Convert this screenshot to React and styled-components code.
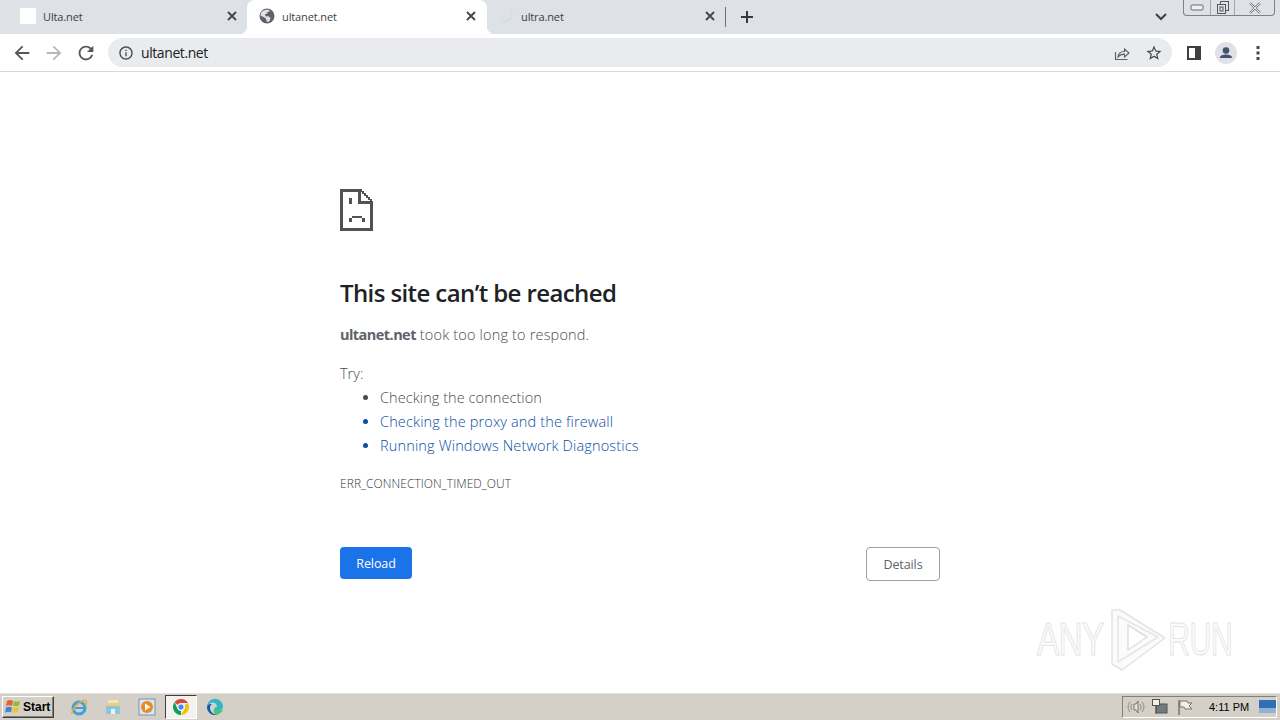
import React from 'react';
import styled, {createGlobalStyle} from 'styled-components';

const FONT = '"Open Sans", "Noto Sans", sans-serif';

const Global = createGlobalStyle`
  html, body {
    margin: 0;
    padding: 0;
    background: #fff;
    overflow: hidden;
  }
  body {
    font-family: ${FONT};
  }
  * {
    box-sizing: border-box;
  }
`;

const Page = styled.div`
  position: relative;
  width: 1280px;
  height: 720px;
  display: flex;
  flex-direction: column;
  overflow: hidden;
`;

/* browser chrome */
const TabStrip = styled.div`
  height: 34px;
  flex: none;
  display: flex;
  background: #dee1e6;
`;

const Tab = styled.div`
  position: relative;
  width: ${p => p.$width}px;
  height: 34px;
  flex: none;
  display: flex;
  align-items: center;
  padding: 0 ${p => (p.$active ? 9 : 8)}px 2px ${p => p.$left}px;
  border-radius: 8px 8px 0 0;
  background: ${p => (p.$active ? '#fff' : 'transparent')};

  ${p => p.$active && `
    &::before, &::after {
      content: '';
      position: absolute;
      bottom: 0;
      width: 8px;
      height: 8px;
    }
    &::before {
      left: -8px;
      background: radial-gradient(circle at 0 0, transparent 8px, #fff 8.5px);
    }
    &::after {
      right: -8px;
      background: radial-gradient(circle at 100% 0, transparent 8px, #fff 8.5px);
    }
  `}
`;

const TabTitle = styled.span`
  flex: 1;
  margin-left: ${p => p.$gap}px;
  font-size: 11px;
  letter-spacing: -0.12px;
  color: #3c4043;
  white-space: nowrap;
`;

const BlankFavicon = styled.div`
  width: 16px;
  height: 16px;
  background: #fff;
`;

const TabClose = styled.svg`
  width: 12px;
  height: 12px;
  flex: none;
  margin-right: 1px;
`;

const TabDivider = styled.div`
  width: 1px;
  height: 20px;
  margin: 7px 0 0 0;
  background: #6f7276;
`;

const NewTab = styled.svg`
  width: 16px;
  height: 16px;
  margin: 9px 0 0 13px;
`;

const StripRight = styled.div`
  margin-left: auto;
  display: flex;
  align-items: flex-start;
`;

const Chevron = styled.svg`
  width: 14px;
  height: 10px;
  margin: 12px 15px 0 0;
`;

const WindowControls = styled.div`
  width: 92px;
  height: 16px;
  margin-right: 5px;
  display: flex;
  border: 1px solid #7d8086;
  border-top: none;
  border-radius: 0 0 4px 4px;
`;

const WindowButton = styled.div`
  flex: none;
  width: ${p => p.$width}px;
  display: flex;
  align-items: center;
  justify-content: center;
  border-left: ${p => (p.$first ? 'none' : '1px solid #a4a7ac')};
`;

const Toolbar = styled.div`
  height: 38px;
  flex: none;
  display: flex;
  align-items: flex-start;
  padding: 4px 0 0 0;
  background: #fff;
  border-bottom: 1px solid #d8d9db;
`;

const NavButton = styled.div`
  width: 32px;
  height: 29px;
  flex: none;
  display: flex;
  align-items: center;
  justify-content: center;
  margin-left: ${p => p.$left || 0}px;
`;

const Omnibox = styled.div`
  width: 1064px;
  height: 29px;
  margin-left: 6px;
  flex: none;
  display: flex;
  align-items: center;
  padding: 0 9px 0 10px;
  border-radius: 15px;
  background: #e9ebee;
`;

const Url = styled.span`
  flex: 1;
  margin-left: 7px;
  font-size: 14px;
  letter-spacing: -0.42px;
  color: #202124;
`;

const OmniIcon = styled.svg`
  width: 18px;
  height: 18px;
  flex: none;
  margin-left: ${p => p.$left || 0}px;
`;

const ToolIcon = styled.svg`
  width: ${p => p.$size || 18}px;
  height: ${p => p.$size || 18}px;
  flex: none;
`;

/* error page */
const Content = styled.main`
  flex: 1;
  background: #fff;
  padding: 117px 0 0 340px;
`;

const Interstitial = styled.div`
  width: 600px;
`;

const SadTab = styled.svg`
  display: block;
  width: 33px;
  height: 42px;
`;

const Heading = styled.h1`
  margin: 44px 0 0;
  font-size: 24px;
  line-height: 36px;
  font-weight: 600;
  letter-spacing: -0.6px;
  color: #202124;
`;

const Lead = styled.p`
  margin: 12px 0 0;
  font-size: 14.5px;
  line-height: 24px;
  font-weight: 300;
  letter-spacing: 0.17px;
  color: #4a4c50;

  strong {
    font-weight: 700;
    letter-spacing: -0.55px;
    color: #5f6368;
  }
`;

const TryLabel = styled.p`
  margin: 15px 0 0;
  font-size: 14.5px;
  line-height: 24px;
  font-weight: 300;
  letter-spacing: 0;
  color: #4a4c50;
`;

const Suggestions = styled.ul`
  margin: 0;
  padding: 0 0 0 40px;
  list-style: disc;
  color: #5f6368;
`;

const Suggestion = styled.li`
  font-size: 14.5px;
  line-height: 24px;
  font-weight: 300;
  letter-spacing: ${p => (p.$link ? 0.15 : 0.07)}px;
  color: ${p => (p.$link ? '#0a4ea6' : '#4a4c50')};
`;

const ErrorCode = styled.div`
  margin-top: 17px;
  font-size: 12px;
  line-height: 18px;
  font-weight: 300;
  letter-spacing: 0.06px;
  color: #33363a;
`;

const Actions = styled.div`
  margin-top: 54px;
  display: flex;
  justify-content: space-between;
  align-items: flex-start;
`;

const ReloadButton = styled.button`
  width: 72px;
  height: 32px;
  padding: 0;
  border: none;
  border-radius: 4px;
  background: #1a73e8;
  color: #fff;
  font-family: ${FONT};
  font-size: 12.5px;
  letter-spacing: -0.1px;
`;

const DetailsButton = styled.button`
  width: 74px;
  height: 34px;
  padding: 0;
  border: 1px solid #9aa0a6;
  border-radius: 4px;
  background: #fff;
  color: #5f6368;
  font-family: ${FONT};
  font-size: 12.5px;
  letter-spacing: -0.1px;
`;

/* watermark sits over the page */
const Watermark = styled.div`
  position: absolute;
  left: 1037px;
  top: 606px;
  height: 66px;
  display: flex;
  align-items: center;
  pointer-events: none;
`;

const WatermarkWord = styled.span`
  font-family: "Liberation Sans", sans-serif;
  font-size: 47px;
  line-height: 66px;
  letter-spacing: -1px;
  color: #fbfbfb;
  -webkit-text-stroke: 1px #e3e3e3;
  transform: scaleX(${p => p.$scale});
  transform-origin: left center;
  margin: ${p => p.$margin};
`;

/* taskbar */
const Taskbar = styled.footer`
  height: 28px;
  flex: none;
  display: flex;
  align-items: center;
  background: #d4d0c8;
  border-top: 1px solid #fff;
  box-shadow: inset 0 1px 0 #e6e3dc;
`;

const StartButton = styled.button`
  width: 52px;
  height: 22px;
  margin-left: 2px;
  padding: 0 0 0 1px;
  display: flex;
  align-items: center;
  gap: 1px;
  background: #d4d0c8;
  border: 1px solid;
  border-color: #fff #404040 #404040 #fff;
  box-shadow: inset -1px -1px 0 #808080;
  font-family: "Liberation Sans", sans-serif;
  font-size: 12px;
  font-weight: 700;
  color: #000;
`;

const QuickLaunch = styled.div`
  display: flex;
  align-items: center;
  margin-left: 8px;
`;

const LaunchItem = styled.div`
  width: ${p => (p.$active ? 32 : 34)}px;
  height: 24px;
  margin: 0 ${p => (p.$active ? 1 : 0)}px;
  display: flex;
  align-items: center;
  justify-content: center;
  ${p => p.$active && `
    background: #f4f2ee;
    border: 1px solid;
    border-color: #404040 #fff #fff #404040;
  `}
`;

const Tray = styled.div`
  margin-left: auto;
  width: 155px;
  height: 22px;
  display: flex;
  align-items: center;
  padding-left: 4px;
  margin-right: 3px;
  border: 1px solid;
  border-color: #808080 #fff #fff #808080;
`;

const TrayIcon = styled.svg`
  width: 18px;
  height: 18px;
  flex: none;
  margin-right: ${p => p.$gap || 0}px;
`;

const Clock = styled.span`
  margin-left: 15px;
  width: 50px;
  flex: none;
  font-family: "Liberation Sans", sans-serif;
  font-size: 11px;
  color: #000;
  white-space: nowrap;
`;

const CloseGlyph = () => (
  <TabClose viewBox="0 0 12 12">
    <path d="M2 2l8 8M10 2l-8 8" stroke="#44474b" strokeWidth="1.9" fill="none"/>
  </TabClose>
);

const GlobeIcon = () => (
  <svg width="16" height="16" viewBox="0 0 16 16">
    <circle cx="8" cy="8" r="7.5" fill="#5f6368"/>
    <path d="M3.2 3.4C5 1.7 8 1.2 10.2 2l.3 1.6-2 .5-.6 1.6-2 .6 1 2.2 2.6-.2 2 1.7-.9 3A6 6 0 0 1 8 14l-1-3.2-2-1.6-3.4-1.5c0-1.6.6-3.3 1.6-4.7z" fill="#dfe1e5"/>
  </svg>
);

const Spinner = () => (
  <svg width="16" height="16" viewBox="0 0 16 16">
    <path d="M10.5 1.5A7 7 0 0 1 3 13" stroke="#cfddf0" strokeWidth="2" fill="none"/>
  </svg>
);

const SadTabIcon = () => (
  <SadTab viewBox="0 0 33 42" shapeRendering="crispEdges">
    <path
      fill="#505356"
      fillRule="evenodd"
      d="M0 0h22v2h2v2h2v2h2v2h2v2h2v2h1v30H0zM3 3v36h27V15H18V3zM21 3h1v2h2v2h2v2h2v2h2v1h-9z"
    />
    <path fill="#505356" d="M9 9h3v6H9zM9 29h3v4H9zM12 27h10v2H12zM22 29h3v4h-3z"/>
  </SadTab>
);

const StartFlag = () => (
  <svg width="18" height="18" viewBox="0 0 18 18">
    <path d="M3 3c2-1.5 4-1.5 6 0L8 8C6 7 4 7 2 8z" fill="#e8622c"/>
    <path d="M10 3c2 1 4 1 6-.3L15 7.500c-2 1-4 1-6 0z" fill="#8dbb3c"/>
    <path d="M2 9.500c2-1 4-1 6 0L7 14.500c-2-1-4-1-6 .3z" fill="#3a86d8"/>
    <path d="M9 9c2 1 4 1 6 0l-1 5c-2 1-4 1-6 0z" fill="#f2c230"/>
  </svg>
);

const IeIcon = () => (
  <svg width="18" height="18" viewBox="0 0 18 18">
    <circle cx="9" cy="10" r="6" fill="none" stroke="#3f9fe0" strokeWidth="3"/>
    <path d="M4 10h10" stroke="#3f9fe0" strokeWidth="2"/>
    <path d="M2 16C1 12 8 4 15 2" stroke="#e3b23c" strokeWidth="1.5" fill="none"/>
    <path d="M15 2c2 1 2 4 .5 6" stroke="#e3b23c" strokeWidth="1.5" fill="none"/>
  </svg>
);

const FolderIcon = () => (
  <svg width="18" height="18" viewBox="0 0 18 18">
    <path d="M4 2h10v4H4z" fill="#f0e6b8"/>
    <path d="M2 5h14v11H2z" fill="#8fc3de"/>
    <path d="M2 5h14v3H2z" fill="#e7cf82"/>
    <path d="M7 16v-5h4v5z" fill="#eaf4f9"/>
  </svg>
);

const PlayerIcon = () => (
  <svg width="18" height="18" viewBox="0 0 18 18">
    <rect x="1" y="1" width="16" height="16" fill="#dbe6f0" stroke="#6f93b8"/>
    <circle cx="9" cy="9" r="6" fill="#ea8a1f"/>
    <path d="M7 5.500l5.500 3.500L7 12.500z" fill="#fff"/>
  </svg>
);

const ChromeIcon = () => (
  <svg width="18" height="18" viewBox="0 0 18 18">
    <path d="M9 1a8 8 0 0 1 6.930 4H9a4 4 0 0 0-3.460 2L2.700 4.100A8 8 0 0 1 9 1z" fill="#db4437"/>
    <path d="M15.930 5A8 8 0 0 1 9 17l3.460-6A4 4 0 0 0 12.460 7z" fill="#f4c20d"/>
    <path d="M2.700 4.100L5.540 11A4 4 0 0 0 9 13v4A8 8 0 0 1 2.700 4.100z" fill="#0f9d58"/>
    <circle cx="9" cy="9" r="3.200" fill="#4285f4" stroke="#fff" strokeWidth="1"/>
  </svg>
);

const EdgeIcon = () => (
  <svg width="18" height="18" viewBox="0 0 18 18">
    <path d="M1 9a8 8 0 0 1 16-.5c0 2.500-2 3.500-4 3.500H8c0-2 1.500-3 3-3 0-3-2-4.500-4-4.500S2 6 1 9z" fill="#2fb6c8"/>
    <path d="M1 9c0-2 2.500-3.500 5-3-2 1-2.500 4-1.500 6.500S8.500 17 12 16.500A8 8 0 0 1 1 9z" fill="#0c59a4"/>
    <path d="M8 12h5c1.500 0 3-.5 4-1.500a8 8 0 0 1-5 6c-3 .5-5-2-4-4.500z" fill="#49c66a"/>
  </svg>
);

const App = () => (
  <Page>
    <Global/>
    <TabStrip>
      <Tab $width={247} $left={20}>
        <BlankFavicon/>
        <TabTitle $gap={7}>Ulta.net</TabTitle>
        <CloseGlyph/>
      </Tab>
      <Tab $width={240} $left={12} $active>
        <GlobeIcon/>
        <TabTitle $gap={7}>ultanet.net</TabTitle>
        <CloseGlyph/>
      </Tab>
      <Tab $width={238} $left={12}>
        <Spinner/>
        <TabTitle $gap={6}>ultra.net</TabTitle>
        <CloseGlyph/>
      </Tab>
      <TabDivider/>
      <NewTab viewBox="0 0 16 16">
        <path d="M8 2v12M2 8h12" stroke="#35383c" strokeWidth="2" fill="none"/>
      </NewTab>
      <StripRight>
        <Chevron viewBox="0 0 14 10">
          <path d="M2 2l5 5 5-5" stroke="#3c4043" strokeWidth="2" fill="none"/>
        </Chevron>
        <WindowControls>
          <WindowButton $width={26} $first>
            <svg width="15" height="7" viewBox="0 0 15 7">
              <rect x="1" y="1" width="12" height="5" rx="1" fill="#eef0f2" stroke="#6a6d72"/>
            </svg>
          </WindowButton>
          <WindowButton $width={24}>
            <svg width="14" height="14" viewBox="0 0 14 14">
              <rect x="4.500" y="0.500" width="8" height="9" fill="none" stroke="#55585c"/>
              <rect x="1.500" y="3.500" width="8" height="9" fill="#dee1e6" stroke="#55585c"/>
              <rect x="4" y="6" width="3" height="4" fill="none" stroke="#55585c"/>
            </svg>
          </WindowButton>
          <WindowButton $width={40}>
            <svg width="14" height="12" viewBox="0 0 14 12">
              <path d="M2 1l10 10M12 1L2 11" stroke="#7c7f84" strokeWidth="2.4" fill="none"/>
              <path d="M2 1l10 10M12 1L2 11" stroke="#e6e8eb" strokeWidth="1" fill="none"/>
            </svg>
          </WindowButton>
        </WindowControls>
      </StripRight>
    </TabStrip>

    <Toolbar>
      <NavButton $left={6}>
        <ToolIcon viewBox="0 0 24 24" $size={22}>
          <path fill="#53565a" d="M20 11H7.830l5.590-5.590L12 4l-8 8 8 8 1.410-1.410L7.830 13H20v-2z"/>
        </ToolIcon>
      </NavButton>
      <NavButton>
        <ToolIcon viewBox="0 0 24 24" $size={22}>
          <path fill="#b4b7bb" d="M12 4l-1.410 1.410L16.170 11H4v2h12.170l-5.580 5.590L12 20l8-8z"/>
        </ToolIcon>
      </NavButton>
      <NavButton>
        <ToolIcon viewBox="0 0 24 24" $size={22}>
          <path fill="#53565a" d="M17.650 6.350A7.958 7.958 0 0 0 12 4c-4.420 0-7.990 3.580-7.990 8s3.570 8 7.990 8c3.730 0 6.840-2.550 7.730-6h-2.080A5.990 5.990 0 0 1 12 18c-3.310 0-6-2.690-6-6s2.690-6 6-6c1.660 0 3.140.690 4.220 1.780L13 11h7V4l-2.350 2.350z"/>
        </ToolIcon>
      </NavButton>
      <Omnibox>
        <ToolIcon viewBox="0 0 24 24" $size={16}>
          <path fill="#44474b" d="M11 7h2v2h-2zm0 4h2v6h-2zm1-9C6.480 2 2 6.480 2 12s4.480 10 10 10 10-4.480 10-10S17.520 2 12 2zm0 18c-4.410 0-8-3.590-8-8s3.590-8 8-8 8 3.590 8 8-3.590 8-8 8z"/>
        </ToolIcon>
        <Url>ultanet.net</Url>
        <OmniIcon viewBox="0 0 18 18">
          <path d="M2.500 8v7.500h12" fill="none" stroke="#5f6368" strokeWidth="1.2"/>
          <path d="M5 13c.3-3.500 2.800-5.500 6.500-5.500V5l4.500 4-4.500 4v-2.800C8.500 10.200 6.500 11 5 13z" fill="none" stroke="#5f6368" strokeWidth="1.2"/>
        </OmniIcon>
        <OmniIcon viewBox="0 0 24 24" $left={14}>
          <path fill="#44474b" d="M22 9.240l-7.190-.620L12 2 9.190 8.630 2 9.240l5.460 4.730L5.820 21 12 17.270 18.180 21l-1.630-7.030L22 9.240zM12 15.400l-3.760 2.270 1-4.280-3.320-2.880 4.380-.380L12 6.100l1.710 4.040 4.380.380-3.320 2.880 1 4.280L12 15.400z"/>
        </OmniIcon>
      </Omnibox>
      <NavButton $left={6}>
        <ToolIcon viewBox="0 0 14 14" $size={14}>
          <rect x="1" y="1" width="12" height="12" fill="#fff" stroke="#3c4043" strokeWidth="2"/>
          <rect x="8" y="1" width="5" height="12" fill="#3c4043"/>
        </ToolIcon>
      </NavButton>
      <NavButton>
        <ToolIcon viewBox="0 0 22 22" $size={22}>
          <circle cx="11" cy="11" r="11" fill="#dfe1e7"/>
          <circle cx="11" cy="8.500" r="3.300" fill="#44546f"/>
          <path d="M4.800 16c0-2.600 3.400-3.600 6.200-3.600s6.200 1 6.200 3.600z" fill="#44546f"/>
        </ToolIcon>
      </NavButton>
      <NavButton>
        <ToolIcon viewBox="0 0 4 14" $size={14}>
          <path fill="#44474b" d="M.5 0h3v3h-3zM.5 5.500h3v3h-3zM.5 11h3v3h-3z"/>
        </ToolIcon>
      </NavButton>
    </Toolbar>

    <Content>
      <Interstitial>
        <SadTabIcon/>
        <Heading>This site can’t be reached</Heading>
        <Lead><strong>ultanet.net</strong> took too long to respond.</Lead>
        <TryLabel>Try:</TryLabel>
        <Suggestions>
          <Suggestion>Checking the connection</Suggestion>
          <Suggestion $link>Checking the proxy and the firewall</Suggestion>
          <Suggestion $link>Running Windows Network Diagnostics</Suggestion>
        </Suggestions>
        <ErrorCode>ERR_CONNECTION_TIMED_OUT</ErrorCode>
        <Actions>
          <ReloadButton>Reload</ReloadButton>
          <DetailsButton>Details</DetailsButton>
        </Actions>
      </Interstitial>
    </Content>

    <Watermark>
      <WatermarkWord $scale={0.71} $margin="0 -26px 0 0">ANY</WatermarkWord>
      <svg width="62" height="66" viewBox="0 0 62 66">
        <g fill="none" strokeLinejoin="round">
          <path d="M7 4v54l10 6 43-32L15 4z" fill="#fbfbfb" stroke="#e3e3e3" strokeWidth="1.5"/>
          <path d="M13 10v46l40-25z" stroke="#e6e6e6" strokeWidth="1.5"/>
          <path d="M23 19v25l19-13z" fill="#fff" stroke="#dedede" strokeWidth="1.5"/>
        </g>
      </svg>
      <WatermarkWord $scale={0.65} $margin="0 0 0 1px">RUN</WatermarkWord>
    </Watermark>

    <Taskbar>
      <StartButton><StartFlag/>Start</StartButton>
      <QuickLaunch>
        <LaunchItem><IeIcon/></LaunchItem>
        <LaunchItem><FolderIcon/></LaunchItem>
        <LaunchItem><PlayerIcon/></LaunchItem>
        <LaunchItem $active><ChromeIcon/></LaunchItem>
        <LaunchItem><EdgeIcon/></LaunchItem>
      </QuickLaunch>
      <Tray>
        <TrayIcon viewBox="0 0 18 18" $gap={6}>
          <path d="M7 6h2l2-3v12l-2-3H7z" fill="#e6e4de" stroke="#77756f"/>
          <path d="M13 6c1.500 2 1.500 4 0 6M15 4c2.500 3 2.500 7 0 10M5 6c-1.500 2-1.500 4 0 6M3 4c-2.500 3-2.500 7 0 10" fill="none" stroke="#8a8880"/>
        </TrayIcon>
        <TrayIcon viewBox="0 0 18 18" $gap={7}>
          <rect x="5" y="6" width="11" height="9" fill="#6d7c7e" stroke="#55534f"/>
          <rect x="1.500" y="1.500" width="7" height="6" fill="#f1efe9" stroke="#55534f"/>
          <path d="M5 7v9" stroke="#55534f"/>
        </TrayIcon>
        <TrayIcon viewBox="0 0 18 18">
          <path d="M3 2v15" stroke="#77756f" strokeWidth="1.5"/>
          <path d="M4 3h7l1 2h4l-3 3 3 3H9L8 9H4z" fill="#f1efe9" stroke="#77756f"/>
        </TrayIcon>
        <Clock>4:11 PM</Clock>
        <svg width="17" height="13" viewBox="0 0 17 13">
          <rect width="17" height="13" fill="#2f6fb5"/>
          <rect y="8" width="17" height="5" fill="#8fb2d6"/>
        </svg>
      </Tray>
    </Taskbar>
  </Page>
);

export default App;
